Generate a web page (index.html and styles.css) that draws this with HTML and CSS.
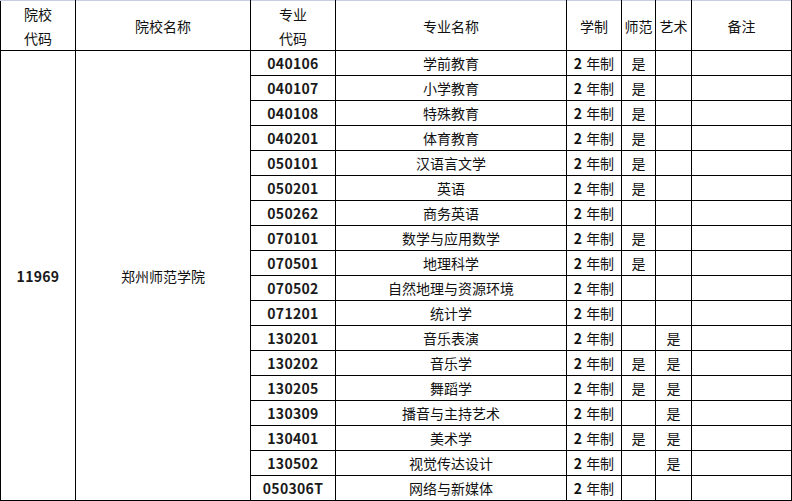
FILE: index.html
```html
<!DOCTYPE html>
<html lang="zh">
<head>
<meta charset="utf-8">
<link rel="stylesheet" href="styles.css">
</head>
<body>
<table class="grid">
  <colgroup>
    <col class="c1"><col class="c2"><col class="c3"><col class="c4"><col class="c5"><col class="c6"><col class="c7"><col class="c8">
  </colgroup>
  <thead>
    <tr class="head">
      <th>院校<br>代码</th>
      <th>院校名称</th>
      <th>专业<br>代码</th>
      <th>专业名称</th>
      <th>学制</th>
      <th>师范</th>
      <th>艺术</th>
      <th>备注</th>
    </tr>
  </thead>
  <tbody>
    <tr><td rowspan="18" class="code">11969</td><td rowspan="18">郑州师范学院</td><td class="code">040106</td><td>学前教育</td><td><span class="num">2</span>年制</td><td>是</td><td></td><td></td></tr>
    <tr><td class="code">040107</td><td>小学教育</td><td><span class="num">2</span>年制</td><td>是</td><td></td><td></td></tr>
    <tr><td class="code">040108</td><td>特殊教育</td><td><span class="num">2</span>年制</td><td>是</td><td></td><td></td></tr>
    <tr><td class="code">040201</td><td>体育教育</td><td><span class="num">2</span>年制</td><td>是</td><td></td><td></td></tr>
    <tr><td class="code">050101</td><td>汉语言文学</td><td><span class="num">2</span>年制</td><td>是</td><td></td><td></td></tr>
    <tr><td class="code">050201</td><td>英语</td><td><span class="num">2</span>年制</td><td>是</td><td></td><td></td></tr>
    <tr><td class="code">050262</td><td>商务英语</td><td><span class="num">2</span>年制</td><td></td><td></td><td></td></tr>
    <tr><td class="code">070101</td><td>数学与应用数学</td><td><span class="num">2</span>年制</td><td>是</td><td></td><td></td></tr>
    <tr><td class="code">070501</td><td>地理科学</td><td><span class="num">2</span>年制</td><td>是</td><td></td><td></td></tr>
    <tr><td class="code">070502</td><td>自然地理与资源环境</td><td><span class="num">2</span>年制</td><td></td><td></td><td></td></tr>
    <tr><td class="code">071201</td><td>统计学</td><td><span class="num">2</span>年制</td><td></td><td></td><td></td></tr>
    <tr><td class="code">130201</td><td>音乐表演</td><td><span class="num">2</span>年制</td><td></td><td>是</td><td></td></tr>
    <tr><td class="code">130202</td><td>音乐学</td><td><span class="num">2</span>年制</td><td>是</td><td>是</td><td></td></tr>
    <tr><td class="code">130205</td><td>舞蹈学</td><td><span class="num">2</span>年制</td><td>是</td><td>是</td><td></td></tr>
    <tr><td class="code">130309</td><td>播音与主持艺术</td><td><span class="num">2</span>年制</td><td></td><td>是</td><td></td></tr>
    <tr><td class="code">130401</td><td>美术学</td><td><span class="num">2</span>年制</td><td>是</td><td>是</td><td></td></tr>
    <tr><td class="code">130502</td><td>视觉传达设计</td><td><span class="num">2</span>年制</td><td></td><td>是</td><td></td></tr>
    <tr><td class="code">050306T</td><td>网络与新媒体</td><td><span class="num">2</span>年制</td><td></td><td></td><td></td></tr>
  </tbody>
</table>
</body>
</html>
```

FILE: styles.css
```css
html, body {
  margin: 0;
  padding: 0;
  background: #ffffff;
}

.grid {
  border-collapse: collapse;
  table-layout: fixed;
  width: 791px;
  font-family: "Noto Sans CJK SC", "Noto Sans", sans-serif;
  font-size: 14px;
  color: #111;
}

.c1 { width: 75px; }
.c2 { width: 175px; }
.c3 { width: 85px; }
.c4 { width: 231px; }
.c5 { width: 55px; }
.c6 { width: 34px; }
.c7 { width: 36px; }
.c8 { width: 100px; }

.grid th,
.grid td {
  border: 1px solid #000;
  padding: 0;
  text-align: center;
  vertical-align: middle;
  white-space: nowrap;
  overflow: hidden;
}

.grid th {
  font-weight: normal;
  height: 49px;
  line-height: 24px;
  border-top: 1px solid #c9cde2;
}

.grid td {
  height: 24px;
  line-height: 20px;
}

.grid td.code {
  font-weight: bold;
  color: #1a1a1a;
  letter-spacing: 0.3px;
}

.num {
  font-weight: bold;
  margin-right: 4px;
}
```
